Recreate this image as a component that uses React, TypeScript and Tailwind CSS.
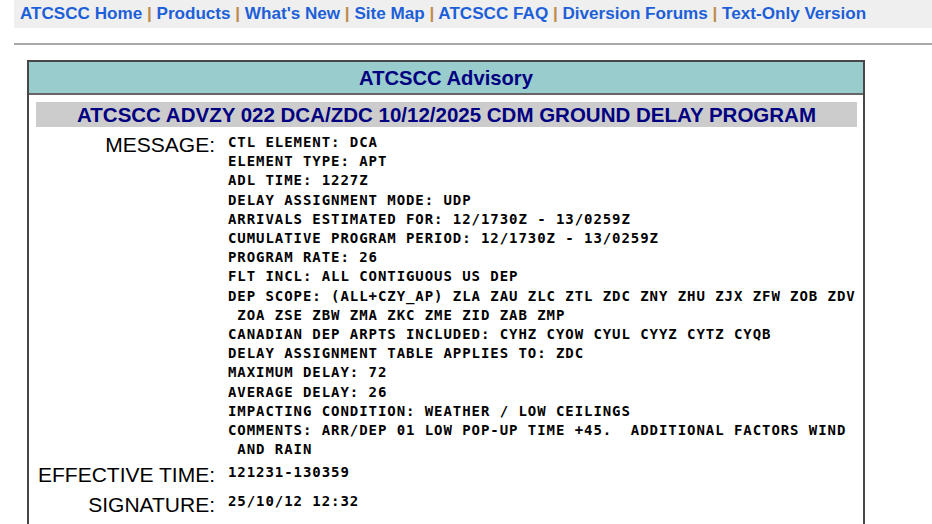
const navLinks = [
  'ATCSCC Home',
  'Products',
  "What's New",
  'Site Map',
  'ATCSCC FAQ',
  'Diversion Forums',
  'Text-Only Version',
]

const messageLines = [
  'CTL ELEMENT: DCA',
  'ELEMENT TYPE: APT',
  'ADL TIME: 1227Z',
  'DELAY ASSIGNMENT MODE: UDP',
  'ARRIVALS ESTIMATED FOR: 12/1730Z - 13/0259Z',
  'CUMULATIVE PROGRAM PERIOD: 12/1730Z - 13/0259Z',
  'PROGRAM RATE: 26',
  'FLT INCL: ALL CONTIGUOUS US DEP',
  'DEP SCOPE: (ALL+CZY_AP) ZLA ZAU ZLC ZTL ZDC ZNY ZHU ZJX ZFW ZOB ZDV',
  ' ZOA ZSE ZBW ZMA ZKC ZME ZID ZAB ZMP',
  'CANADIAN DEP ARPTS INCLUDED: CYHZ CYOW CYUL CYYZ CYTZ CYQB',
  'DELAY ASSIGNMENT TABLE APPLIES TO: ZDC',
  'MAXIMUM DELAY: 72',
  'AVERAGE DELAY: 26',
  'IMPACTING CONDITION: WEATHER / LOW CEILINGS',
  'COMMENTS: ARR/DEP 01 LOW POP-UP TIME +45.  ADDITIONAL FACTORS WIND',
  ' AND RAIN',
]

const mono =
  "font-['DejaVu_Sans_Mono',monospace] text-[14px] leading-[19.2px] font-bold tracking-[0.94px] text-black whitespace-pre"
const label =
  "text-right font-['Liberation_Sans',Arial,sans-serif] text-[21px] leading-[23px] text-black"

const App = () => {
  return (
    <div className="min-h-[524px] bg-white pl-[14px] font-['Liberation_Sans',Arial,sans-serif]">
      {/* top nav */}
      <div className="flex h-[28px] items-center bg-[#efefef] pl-[6px] text-[17.1px] font-bold text-[#1d5fd8]">
        {navLinks.map((l, i) => (
          <span key={l} className="whitespace-pre">
            {i > 0 && <span className="text-[#c08a4c]"> | </span>}
            <a href="#">{l}</a>
          </span>
        ))}
      </div>
      <div className="mt-[15px] h-[2px] bg-[#a8a8a8]"></div>

      {/* advisory table */}
      <div className="ml-[13px] mt-[15px] w-[838px] border-2 border-[#474747]">
        <div className="h-[33px] border-b-2 border-[#666] bg-[#99cccc] pt-[5px] text-center text-[20.2px] leading-[23px] font-bold text-[#000080]">
          ATCSCC Advisory
        </div>
        <div className="pb-[40px] pl-[7px] pr-[6px] pt-[7px]">
          <div className="bg-[#cccccc] py-[1px] text-center text-[20.5px] leading-[23px] font-bold text-[#000080]">
            ATCSCC ADVZY 022 DCA/ZDC 10/12/2025 CDM GROUND DELAY PROGRAM
          </div>
          <div className="mt-[6px] grid grid-cols-[179px_1fr] gap-x-[13px]">
            <div className={label}>MESSAGE:</div>
            <div>
              {messageLines.map((line, i) => (
                <div key={i} className={mono}>
                  {line}
                </div>
              ))}
            </div>
            <div className={`${label} mt-[4px]`}>EFFECTIVE TIME:</div>
            <div className={`${mono} mt-[4px]`}>121231-130359</div>
            <div className={`${label} mt-[7px]`}>SIGNATURE:</div>
            <div className={`${mono} mt-[6px]`}>25/10/12 12:32</div>
          </div>
        </div>
      </div>
    </div>
  )
}

export default App
